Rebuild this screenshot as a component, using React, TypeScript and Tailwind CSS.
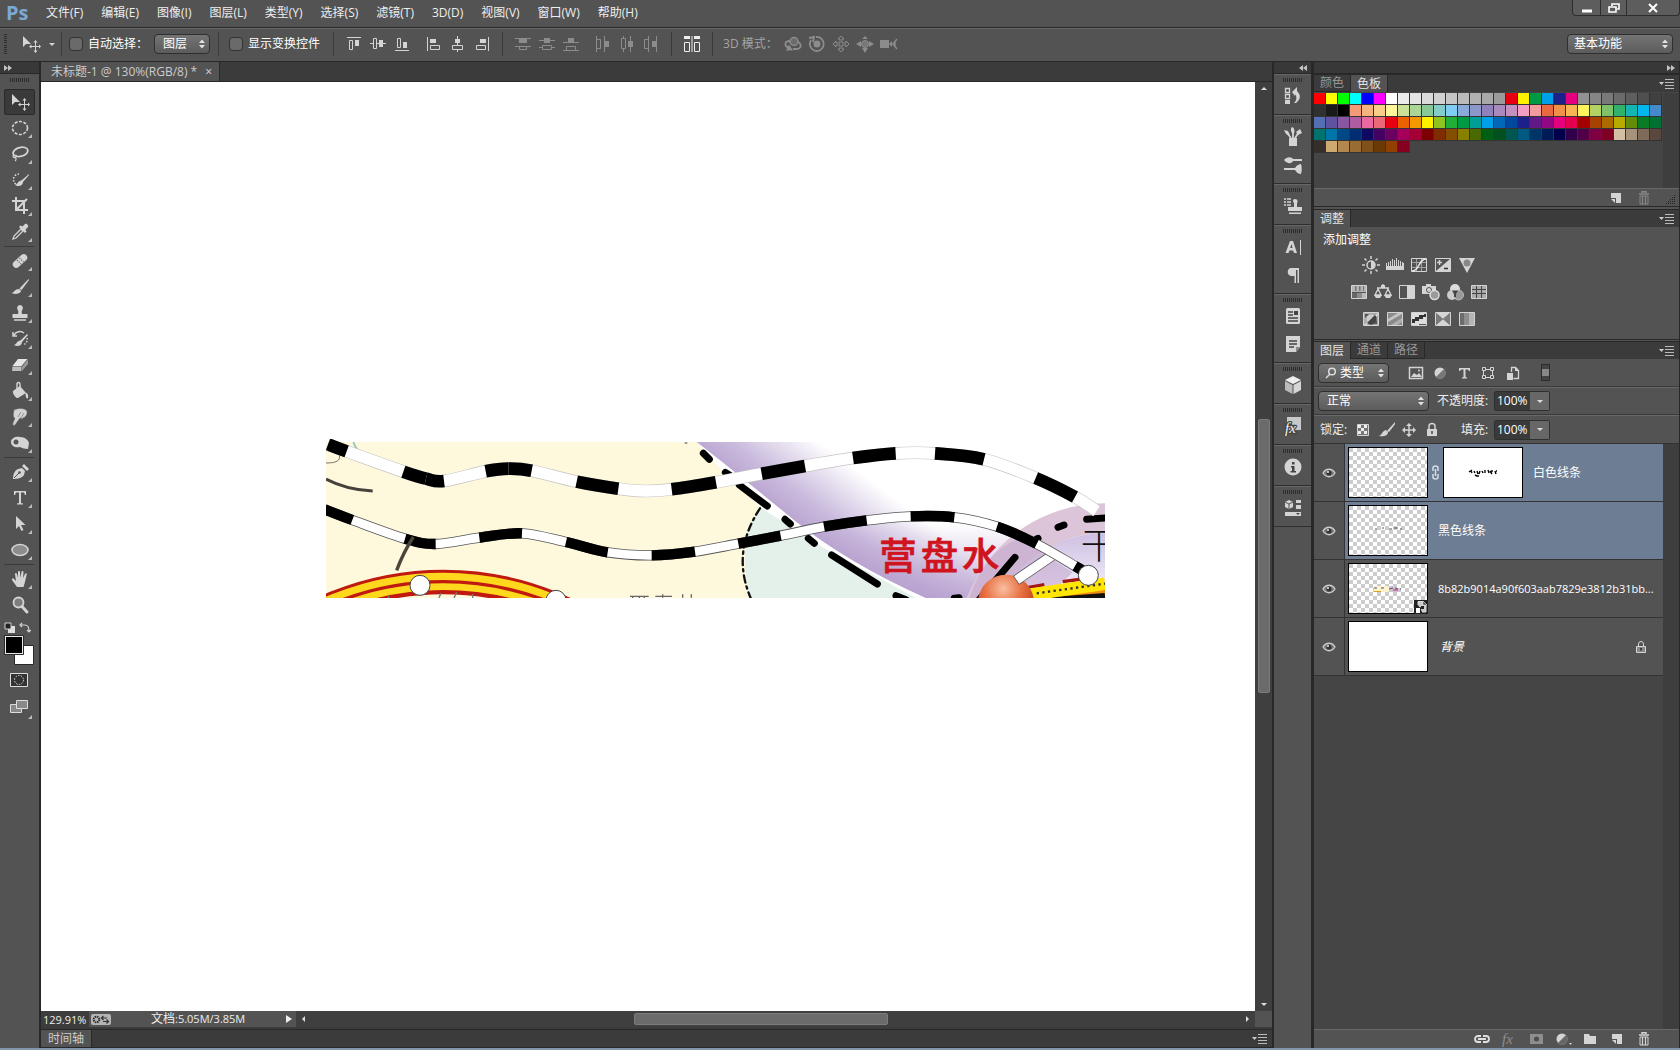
import { useState, type ReactNode } from "react";

type Point = [number, number];

const MENUS = ["文件(F)", "编辑(E)", "图像(I)", "图层(L)", "类型(Y)", "选择(S)", "滤镜(T)", "3D(D)", "视图(V)", "窗口(W)", "帮助(H)"];

const SWATCHES = [
  "ff0000 ffff00 00ff00 00ffff 0000ff ff00ff ffffff ebebeb e3e3e3 dadada d1d1d1 c6c6c6 bbbbbb b1b1b1 a8a8a8 9b9b9b e60012 fff100 009944 00a0e9 1d2088 e4007f 929292 868686 797979 6b6b6b 5e5e5e 4f4f4f 404040",
  "303030 1a1a1a 000000 f29b76 f6b37f facd89 fff799 cce198 acd598 89c997 84ccc9 7ecef4 88abda 8c97cb 8f82bc aa89bd c490bf f19ec2 f29c9f eb6841 f19149 f8b551 fff45c b3d465 80c269 32b16c 13b5b1 00b7ee 448aca",
  "556fb5 5f52a0 8957a1 ae5da1 ea68a2 eb6877 e60012 eb6100 f39800 fff100 8fc31f 22ac38 009944 009e96 00a0e9 0068b7 00479d 1d2088 601986 920783 e4007f e5004f a40000 a84200 ac6a00 b7aa00 638c0b 097c25 007130",
  "00736d 0075a9 004986 002e73 100964 440062 6a005f a4005b a40035 7d0000 7f2d00 834e00 8a8000 486a00 005e15 005020 005752 005982 003567 001c58 03004c 31004a 500047 7e0043 7d0022 d2bfa4 a6937c 7e6b5a 5a483f",
  "362e2b cfa972 b28850 996c33 81511c 6a3906 904000 870020",
].map((row) => row.split(" "));

function Icon({ size = 20, className = "", children }: { size?: number; className?: string; children: ReactNode }) {
  return (
    <svg width={size} height={size} viewBox={`0 0 ${size} ${size}`} className={`shrink-0 ${className}`} fill="none" stroke="none" aria-hidden="true">
      {children}
    </svg>
  );
}

/* ---------- icons, toolbox ---------- */
const L = "#d4d4d4";

const icons: Record<string, ReactNode> = {
  move: (
    <>
      <path d="M2 2v11l3-3h5z" fill={L} />
      <path d="M14.500 8v9M10 12.500h9" stroke={L} />
      <path d="M14.500 6l2 2.500h-4zM14.500 19l2-2.500h-4zM8 12.500l2.500-2v4zM20 12.500l-2-2v4z" fill={L} />
    </>
  ),
  ellipse: <ellipse cx="10" cy="10" rx="7.500" ry="6.500" stroke={L} strokeWidth="1.600" strokeDasharray="3 1.500" />,
  lasso: (
    <>
      <ellipse cx="10.500" cy="8" rx="7.500" ry="4.500" stroke={L} strokeWidth="1.800" transform="rotate(-14 10 8)" />
      <path d="M4 11c-2 1-1 3 1 2.500s2-2 .5-2.500M5.500 13.500c1 1.500.5 3-.5 3.500" stroke={L} strokeWidth="1.200" />
    </>
  ),
  quick: (
    <>
      <path d="M9 4a5 5 0 1 0 0 11" stroke={L} strokeWidth="1.600" strokeDasharray="1.500 1.500" />
      <path d="M19 4l-7 6-2 1c-2 0-2 3-5 4 3 2 8 1 8-3l6-7z" fill={L} />
    </>
  ),
  crop: <path d="M6 1v13h12M2 5h12v13M6 14L17 3" stroke={L} strokeWidth="2" />,
  dropper: (
    <>
      <path d="M3 17l1-3 7-7 2 2-7 7z" stroke={L} strokeWidth="1.300" />
      <path d="M9 5l1.500-1.500 2 1L15 2c1.500-1 4 1.500 3 3l-2.500 2.500 1 2L15 11z" fill={L} />
    </>
  ),
  heal: (
    <>
      <rect x="1.500" y="6.500" width="17" height="7" rx="3.500" fill={L} transform="rotate(-42 10 10)" />
      <path d="M7 9l4 4M9.500 7l4 4" stroke="#666" strokeWidth="1.200" strokeDasharray="1.200 1.200" />
    </>
  ),
  brush: <path d="M18.500 2L19 3l-7 9.500c-1 .5-2 0-2.500-1zM9 12l2 1.500c0 3-5 4.500-9.500 2.500 3-.5 3-4 7.500-4z" fill={L} />,
  stamp: (
    <>
      <path d="M10 2a3 3 0 0 1 2.500 4.500c-1 1.500-1 2.500-.5 4.500h5.500v4h-15v-4H8c.5-2 .5-3-.5-4.500A3 3 0 0 1 10 2z" fill={L} />
      <path d="M4 17h12" stroke={L} strokeWidth="1.500" />
    </>
  ),
  history: (
    <>
      <path d="M17 5l-6 6-2 1c-2 0-2 3-5 4 3 2 8 1 8-3l6-7z" fill={L} />
      <path d="M14 4C10 1 6 3 4 6M3 3v4h4" stroke={L} strokeWidth="1.500" />
      <path d="M17 9c1 3-1 6-4 7" stroke={L} strokeWidth="1.500" strokeDasharray="1.500 1.500" />
    </>
  ),
  eraser: (
    <>
      <path d="M8 4h9.500l-6 7H2.500z" fill="#e6e6e6" />
      <path d="M2.500 11.500h9V16H2z" fill="#bdbdbd" />
      <path d="M12 11.500l6-7V9l-6 7z" fill="#999" />
    </>
  ),
  bucket: (
    <>
      <path d="M3 10l7-5 6 7-8 5c-2 1-6-5-5-7z" fill={L} />
      <path d="M7 9V3c0-2 3-2 3 0v7" stroke={L} strokeWidth="1.400" />
      <path d="M15.500 12c2-1 3 3 2.500 5-1 1.500-2.500 0-2.500-5z" fill={L} />
    </>
  ),
  smudge: <path d="M4 3c4-2 9-2 12 0 2 2 1 5-1 7l-2 1-1 1-2-1-5 7c-1 1-3 0-2-2l2-5c-2 0-2-4-1-8zM8 10l3-5M11 11l3-5" fill={L} stroke="#666" strokeWidth=".6" />,
  sponge: (
    <>
      <path d="M1 9c0-4 5-6 9-5 5 0 8 3 9 6l-1 6c-3 0-6-1-8-2-5 1-9-1-9-5z" fill={L} />
      <circle cx="6" cy="9" r="2.500" fill="#555" />
    </>
  ),
  pen: (
    <>
      <path d="M3 17c0-4 1-8 5-10l4-1 3 3-1 4c-2 3-6 4-11 4z" fill={L} />
      <path d="M12 4l2-2 5 5-2 2z" fill={L} />
      <path d="M4 16l5-5" stroke="#555" />
      <circle cx="9.500" cy="10.500" r="1.300" fill="#555" />
    </>
  ),
  type: <path d="M4 3h12v4h-1l-1-2.500h-3V15l2 .5v1H7v-1l2-.5V4.500H6L5 7H4z" fill={L} />,
  arrow: <path d="M6 2v13l3-3 2.500 5 2-1-2.500-5h4.500z" fill={L} />,
  shape: <ellipse cx="10" cy="10" rx="8" ry="5.500" fill="#8d8d8d" stroke={L} strokeWidth="1.500" />,
  hand: <path d="M7 18l-5-7c-.5-1 1-2 2-1l2 2-1-7c0-1.500 1.500-1.500 2 0l1 4V3c0-1.500 2-1.500 2 0l.3 6L11.500 3c.4-1.500 2-1 2 .3L13 9l2-4c.6-1.200 2-.6 1.700.6L15 13l-1.500 5z" fill={L} />,
  zoom: (
    <>
      <circle cx="8.500" cy="7.500" r="5" fill="#7e7e7e" stroke={L} strokeWidth="1.800" />
      <path d="M12 11.500l5 5.500" stroke={L} strokeWidth="3" strokeLinecap="round" />
    </>
  ),
};

const TOOL_GROUPS = [
  [["move", "移动工具"], ["ellipse", "椭圆选框"], ["lasso", "套索"], ["quick", "快速选择"], ["crop", "裁剪"], ["dropper", "吸管"]],
  [["heal", "修复画笔"], ["brush", "画笔"], ["stamp", "仿制图章"], ["history", "历史记录画笔"], ["eraser", "橡皮擦"], ["bucket", "油漆桶"], ["smudge", "涂抹"], ["sponge", "海绵"]],
  [["pen", "钢笔"], ["type", "文字"], ["arrow", "路径选择"], ["shape", "椭圆"]],
  [["hand", "抓手"], ["zoom", "缩放"]],
];

function GripH({ className = "h-3" }: { className?: string }) {
  return (
    <div className={`flex items-center justify-center gap-px ${className}`}>
      {Array.from({ length: 10 }, (_, i) => <span key={i} className="h-1 w-px bg-[#2c2c2c]" />)}
    </div>
  );
}

function Chevrons({ left = false }: { left?: boolean }) {
  return (
    <svg width="8" height="6" viewBox="0 0 8 6" fill="#c4c4c4" aria-hidden="true">
      {left ? <path d="M4 0v6L0 3zM8 0v6L4 3z" /> : <path d="M0 0v6l4-3zM4 0v6l4-3z" />}
    </svg>
  );
}

function Toolbox() {
  const [tool, setTool] = useState("move");
  return (
    <aside className="flex w-[41px] shrink-0 flex-col border-r-2 border-[#282828] bg-[#535353]">
      <div className="flex h-3 items-center border-b border-[#282828] bg-[#383838] pl-1"><Chevrons /></div>
      <GripH />
      <div className="mt-[3px] flex flex-col">
        {TOOL_GROUPS.map((group, gi) => (
          <div key={gi} className={gi ? "relative mt-[3px] before:absolute before:-top-0.5 before:left-1 before:h-px before:w-[30px] before:bg-[#3a3a3a]" : ""}>
            {group.map(([id, label]) => (
              <button
                key={id}
                aria-label={label}
                onClick={() => setTool(id)}
                className={`relative ml-1 flex h-[26px] w-[31px] items-center justify-center rounded-xs border ${tool === id ? "border-[#2a2a2a] bg-[#3a3a3a]" : "border-transparent"}`}
              >
                <Icon>{icons[id]}</Icon>
                {id !== "move" && id !== "zoom" && (
                  <svg width="4" height="4" viewBox="0 0 4 4" className="absolute right-0.5 bottom-0.5"><path d="M4 0v4H0z" fill="#bbb" /></svg>
                )}
              </button>
            ))}
          </div>
        ))}
      </div>
      <div className="mt-0.5 flex h-4 items-center justify-between pr-2 pl-1">
        <Icon size={12}><path d="M4 4h7v7H4z" fill="#ddd" /><path d="M1 1h6v6H1z" fill="#222" stroke={L} /></Icon>
        <Icon size={12}><path d="M2 3h4c3 0 4 2 4 6M3 1L1 3l2 2M8 8l2 2 2-2" stroke={L} strokeWidth="1.200" /></Icon>
      </div>
      <svg width="36" height="32" viewBox="0 0 36 32" className="-mt-px">
        <path d="M14.500 10.500h19v19h-19z" fill="#fff" stroke="#2a2a2a" />
        <path d="M4.500.5h19v19h-19z" fill="#e8e8e8" stroke="#2a2a2a" />
        <path d="M6 2h16v16H6z" fill="#000" />
      </svg>
      <button aria-label="快速蒙版" className="mt-1 ml-2.5 flex h-[18px] w-[18px] items-center justify-center">
        <svg width="18" height="14" viewBox="0 0 18 14"><path d="M.5.5h17v13H.5z" fill="#333" stroke="#ddd" /><circle cx="9" cy="7" r="4.500" fill="none" stroke="#ddd" strokeDasharray="1.500 1.300" /></svg>
      </button>
      <button aria-label="屏幕模式" className="relative mt-2 ml-2.5 flex h-5 w-5 items-center">
        <svg width="18" height="14" viewBox="0 0 18 14" fill="#888" stroke="#ddd"><path d="M.5 4.500h11v8H.5z" /><path d="M6.500.5h11v8h-11z" /></svg>
        <svg width="4" height="4" viewBox="0 0 4 4" className="absolute -right-0.5 -bottom-0.5"><path d="M4 0v4H0z" fill="#bbb" /></svg>
      </button>
    </aside>
  );
}

/* ---------- menu bar and options bar ---------- */
function MenuBar() {
  return (
    <header className="flex h-7 shrink-0 items-center border-b border-[#282828] bg-[#535353] pb-0.5">
      <span className="w-[46px] pl-1.5 font-['Open_Sans',sans-serif] text-[20px] leading-6 font-bold text-[#7ba9d4]">Ps</span>
      <nav className="flex gap-[18px]">
        {MENUS.map((m) => <button key={m} className="whitespace-nowrap text-[#eee]">{m}</button>)}
      </nav>
      <div className="ml-auto flex h-4 self-start overflow-hidden rounded-b-sm border border-t-0 border-[#2d2d2d] bg-[#5d5d5d]">
        <button aria-label="最小化" className="flex w-7 items-center justify-center border-r border-[#2d2d2d]"><svg width="12" height="12" viewBox="0 0 12 12"><path d="M1 7.500h10v3H1z" fill="#fff" /></svg></button>
        <button aria-label="还原" className="flex w-[26px] items-center justify-center border-r border-[#2d2d2d]"><svg width="12" height="12" viewBox="0 0 12 12" fill="none" stroke="#fff" strokeWidth="1.600"><path d="M4 4V2h7v5H9M1 5h7v5H1z" /></svg></button>
        <button aria-label="关闭" className="flex w-[52px] items-center justify-center"><svg width="12" height="12" viewBox="0 0 12 12"><path d="M2 2l8 8M10 2l-8 8" stroke="#fff" strokeWidth="2" /></svg></button>
      </div>
    </header>
  );
}

function Divider() {
  return <span className="h-6 w-px shrink-0 bg-[#3a3a3a]" />;
}

function UpDown() {
  return (
    <svg width="6" height="9" viewBox="0 0 6 9" fill="#e2e2e2" className="pointer-events-none absolute top-1/2 right-1 -translate-y-1/2" aria-hidden="true">
      <path d="M3 0l3 3.500H0zM3 9l3-3.500H0z" />
    </svg>
  );
}

function Dropdown({ label, value, className, pad = "pl-2" }: { label: string; value: string; className: string; pad?: string }) {
  return (
    <div className={`relative h-5 rounded-sm border border-[#2f2f2f] bg-linear-to-b from-[#747474] to-[#5c5c5c] ${className}`}>
      <select aria-label={label} className={`block h-full w-full appearance-none bg-transparent text-white outline-none ${pad}`}>
        <option>{value}</option>
      </select>
      <UpDown />
    </div>
  );
}

function Check({ children }: { children: ReactNode }) {
  return (
    <label className="flex items-center gap-[5px] whitespace-nowrap text-white">
      <input type="checkbox" className="h-[14px] w-[14px] appearance-none rounded-sm border border-[#333] bg-[#6a6a6a] checked:bg-[#cfcfcf]" />
      {children}
    </label>
  );
}

const alignIcons = [
  <><path d="M2 2.500h14" stroke={L} /><path d="M4.500 5.500h3v9h-3z" stroke={L} /><path d="M10 5h4v6h-4z" fill={L} /></>,
  <><path d="M1 8.500h16" stroke={L} /><path d="M4.500 3.500h3v10h-3z" stroke={L} fill="#535353" /><path d="M10 5h4v7h-4z" fill={L} /></>,
  <><path d="M2 15.500h14" stroke={L} /><path d="M4.500 3.500h3v9h-3z" stroke={L} /><path d="M10 7h4v6h-4z" fill={L} /></>,
  <><path d="M2.500 2v14" stroke={L} /><path d="M5 4h6v4H5z" fill={L} /><path d="M5.500 10.500h9v4h-9z" stroke={L} /></>,
  <><path d="M8.500 1v16" stroke={L} /><path d="M6 4h5v4H6z" fill={L} /><path d="M3.500 10.500h10v4h-10z" stroke={L} fill="#535353" /></>,
  <><path d="M15.500 2v14" stroke={L} /><path d="M7 4h6v4H7z" fill={L} /><path d="M3.500 10.500h9v4h-9z" stroke={L} /></>,
];
const G = "#8c8c8c";
const distributeIcons = [
  <><path d="M1 3.500h16M1 11.500h16" stroke={G} /><path d="M5 4h8v4H5z" fill={G} /><path d="M5.500 11.500h7v3h-7z" stroke={G} /></>,
  <><path d="M1 5.500h16M1 12.500h16" stroke={G} /><path d="M6 3h6v5H6z" fill={G} /><path d="M4.500 10.500h9v4h-9z" stroke={G} fill="#535353" /></>,
  <><path d="M1 7.500h16M1 15.500h16" stroke={G} /><path d="M6 3h6v4H6z" fill={G} /><path d="M4.500 11.500h9v4h-9z" stroke={G} /></>,
  <><path d="M2.500 1v16M10.500 1v16" stroke={G} /><path d="M2.500 4.500h4v9h-4z" stroke={G} /><path d="M11 6h4v6h-4z" fill={G} /></>,
  <><path d="M5.500 1v16M12.500 1v16" stroke={G} /><path d="M3.500 3.500h4v10h-4z" stroke={G} fill="#535353" /><path d="M10 6h5v6h-5z" fill={G} /></>,
  <><path d="M6.500 1v16M14.500 1v16" stroke={G} /><path d="M2.500 4.500h4v9h-4z" stroke={G} /><path d="M10 6h4v6h-4z" fill={G} /></>,
];
const modeIcons = [
  <><path d="M6 6c-6 0-6 5-1 7M12 6c6 2 6 7 1 8H9" stroke={G} strokeWidth="1.800" /><circle cx="10" cy="6.500" r="4" fill="#6c6c6c" stroke={G} strokeWidth="1.500" /><path d="M5 9.500l4 6H2z" fill={G} /></>,
  <><circle cx="9" cy="9" r="3.500" fill={G} /><path d="M3 5a7 7 0 1 0 5-3M1 3l5-1-1 5" stroke={G} strokeWidth="1.800" /></>,
  <path d="M9 1l3 3h-2v4h4V6l3 3-3 3v-2h-4v4h2l-3 3-3-3h2v-4H4v2L1 9l3-3v2h4V4H6z" stroke={G} strokeWidth="1" />,
  <><circle cx="9" cy="9" r="3.500" fill="#777" stroke={G} /><path d="M9 1l3 3H6zM6 13h6l-3 5zM0 9l5-3v6zM18 9l-5-3v6z" fill={G} /></>,
  <><path d="M0 5h9v8H0zM9 9l3-3v6z" fill={G} /><path d="M17 4l-4 5 4 5M15 7v4" stroke={G} strokeWidth="1.400" /></>,
];

function IconStrip({ items, names, className = "gap-1.5" }: { items: ReactNode[]; names: string; className?: string }) {
  return (
    <div className={`flex ${className}`}>
      {items.map((it, i) => <button key={i} aria-label={`${names} ${i + 1}`}><Icon size={18}>{it}</Icon></button>)}
    </div>
  );
}

function OptionsBar() {
  return (
    <div className="flex h-[34px] shrink-0 items-center border-t border-b border-t-[#686868] border-b-[#282828] bg-[#535353] pb-0.5">
      <div className="flex w-[61px] items-center">
        <div className="ml-1 flex h-5 w-[3px] flex-col justify-between">
          {Array.from({ length: 10 }, (_, i) => <span key={i} className="h-px bg-[#2c2c2c]" />)}
        </div>
        <Icon className="ml-[14px]">{icons.move}</Icon>
        <span className="ml-[8px] border-x-3 border-t-3 border-transparent border-t-[#d4d4d4]" />
      </div>
      <Divider />
      <div className="ml-[7px] w-[85px]"><Check>自动选择：</Check></div>
      <Dropdown label="自动选择" value="图层" className="w-14" />
      <span className="w-2" />
      <Divider />
      <div className="mr-[13px] ml-2.5"><Check>显示变换控件</Check></div>
      <Divider />
      <div className="mx-[11px] flex gap-[14px]">
        <IconStrip items={alignIcons.slice(0, 3)} names="对齐" />
        <IconStrip items={alignIcons.slice(3)} names="水平对齐" />
      </div>
      <Divider />
      <div className="mx-[11px] flex gap-[14px]">
        <IconStrip items={distributeIcons.slice(0, 3)} names="分布" />
        <IconStrip items={distributeIcons.slice(3)} names="水平分布" />
      </div>
      <Divider />
      <button aria-label="自动对齐图层" className="mx-[11px]">
        <Icon size={18}><path d="M1 1h6v3H1zM11 1h6v3h-6z" fill="#eee" /><path d="M1.500 7.500h5v9h-5zM11.500 7.500h5v9h-5z" stroke="#eee" /><path d="M9 1v16" stroke="#eee" /></Icon>
      </button>
      <Divider />
      <span className="ml-2.5 w-[61px] whitespace-nowrap text-[#a4a4a4]">3D 模式：</span>
      <IconStrip items={modeIcons} names="3D 模式" />
      <div className="mr-[7px] ml-auto"><Dropdown label="工作区" value="基本功能" className="w-[106px]" pad="pl-1.5" /></div>
    </div>
  );
}

/* ---------- document ---------- */
// Each point starts a stretch of track; "b" marks the stretches painted black.
const UPPER: [number, number, string][] = [
  [6, 16, "b"], [62, 37, "w"], [232, 98, "b"], [300, 119, "b"], [354, 126, "w"], [479, 97, "b"], [548, 89, "b"], [617, 95, "w"], [752, 128, "b"], [877, 149, "w"],
  [957, 156, "w"], [1037, 151, "b"], [1170, 130, "w"], [1307, 104, "b"], [1437, 81, "w"], [1581, 57, "b"], [1709, 43, "w"], [1827, 43, "b"], [1974, 61, "w"], [2129, 117, "b"], [2247, 174, "w"], [2312, 216, "w"],
];
const LOWER: [number, number, string][] = [
  [-4, 211, "b"], [79, 243, "w"], [237, 299, "b"], [329, 315, "w"], [460, 296, "b"], [588, 283, "w"], [720, 309, "b"], [845, 340, "w"], [977, 349, "b"], [1107, 338, "w"],
  [1237, 314, "b"], [1364, 290, "w"], [1494, 263, "b"], [1622, 244, "w"], [1754, 232, "b"], [1885, 235, "w"], [2013, 263, "b"], [2132, 315, "w"], [2247, 381, "b"], [2272, 396, "w"],
];

function curves(pts: Point[]) {
  return pts.slice(0, -1).map((p, i) => {
    const prev = pts[i - 1] ?? p;
    const next = pts[i + 1];
    const after = pts[i + 2] ?? next;
    return `M${p[0]} ${p[1]}C${p[0] + (next[0] - prev[0]) / 6} ${p[1] + (next[1] - prev[1]) / 6} ${next[0] - (after[0] - p[0]) / 6} ${next[1] - (after[1] - p[1]) / 6} ${next[0]} ${next[1]}`;
  });
}

function Track({ data, width, edge, inset = 4 }: { data: [number, number, string][]; width: number; edge: string; inset?: number }) {
  const segs = curves(data.map(([x, y]) => [x, y]));
  const whole = segs.map((s, i) => (i ? s.slice(s.indexOf("C")) : s)).join("");
  return (
    <g fill="none">
      <path d={whole} stroke={edge} strokeWidth={width} />
      <path d={whole} stroke="#fff" strokeWidth={width - inset} />
      {segs.map((s, i) => data[i][2] === "b" && <path key={i} d={s} stroke="#000" strokeWidth={width} />)}
    </g>
  );
}

function MapArtwork() {
  return (
    <svg width="779" height="159" viewBox="0 0 2337 477" className="block shrink-0 overflow-hidden" role="img" aria-label="营盘水线路图">
      <defs>
        <linearGradient id="violet" gradientUnits="userSpaceOnUse" x1="1372" y1="233" x2="1520" y2="36">
          <stop offset="0" stopColor="#b8a3d0" /><stop offset=".35" stopColor="#cabbdd" /><stop offset="1" stopColor="#fff" />
        </linearGradient>
        <linearGradient id="haze" gradientUnits="userSpaceOnUse" x1="0" y1="250" x2="0" y2="477">
          <stop offset="0" stopColor="#b49bcd" stopOpacity="0" /><stop offset="1" stopColor="#b49bcd" stopOpacity=".75" />
        </linearGradient>
        <linearGradient id="disc" x1="0" y1="0" x2="0" y2="1"><stop offset="0" stopColor="#cdbfe2" /><stop offset=".25" stopColor="#f4f0fa" /></linearGradient>
        <radialGradient id="ball" cx=".45" cy=".25" r=".6"><stop offset="0" stopColor="#f9bfa2" /><stop offset=".5" stopColor="#e9774a" /><stop offset="1" stopColor="#c9431c" /></radialGradient>
        <clipPath id="page"><path d="M0 9H2337V477H0z" /></clipPath>
      </defs>
      <g clipPath="url(#page)">
        <path d="M0 9H2337V477H0z" fill="#fff" />
        <path d="M0 9H1112L1187 93L1302 205Q1230 310 1272 477H0z" fill="#fef8dd" />
        <path d="M1302 205L1372 250L1472 315L1770 477H1272Q1230 310 1302 205z" fill="#e4f0ea" />
        <path d="M1112 9H2337V477H1800Q1560 370 1400 240Q1230 100 1112 9z" fill="url(#violet)" />
        <path d="M1400 240H2337V477H1800Q1560 370 1400 240z" fill="url(#haze)" />
        <circle cx="2337" cy="639" r="356" fill="url(#disc)" />
        <circle cx="2337" cy="639" r="401" fill="none" stroke="#dcc5d9" strokeWidth="90" />
        <path d="M1930 477Q1980 330 2080 300L2240 400L2160 477z" fill="#c4a9cf" opacity=".6" />
        <g stroke="#000" strokeWidth="21" strokeLinecap="round" fill="none">
          <path d="M1132 43l18 18M1198 100l12 8M1240 138l84 63M1377 241l16 14M1447 298l18 15M1517 348l137 87M1710 470l30 12M2067 355l-110 130M2196 265l18-7M2132 300l4-2M2282 241l60-4M1885 478l14-2" />
        </g>
        <path d="M1302 208Q1215 340 1274 477" fill="none" stroke="#111" strokeWidth="7" strokeDasharray="22 12 7 12" strokeLinecap="round" />
        {/* ring road */}
        <g fill="none">
          <circle cx="352" cy="1293" r="864" stroke="#c01a10" strokeWidth="74" />
          <circle cx="352" cy="1293" r="881" stroke="#ffd81e" strokeWidth="22" />
          <circle cx="352" cy="1293" r="850" stroke="#ffd81e" strokeWidth="20" />
          <path d="M188 470v10M345 462l-6 15M392 460l-8 17M440 465v12" stroke="#777" strokeWidth="4" />
          <path d="M0 120Q60 152 140 156" stroke="#45423c" strokeWidth="9" />
          <path d="M0 72c30 0 44-6 40-24" stroke="#77736a" strokeWidth="3" />
          <path d="M82 9q8 24 22 28" stroke="#5ba7a5" strokeWidth="6" opacity=".6" />
          <path d="M912 472h56M920 477v-6M940 477v-6M955 477v-6M988 472h50M1010 466v10M1070 466v10M1096 466v10" stroke="#666" strokeWidth="4" />
          <path d="M1076 12h8" stroke="#888" strokeWidth="5" />
        </g>
        {/* highway on the right */}
        <path d="M2100 477L2337 440V477z" fill="#f08c12" />
        <path d="M2180 484l157-12" stroke="#111" strokeWidth="20" />
        <path d="M2100 447l55-10M2210 428l60-8" stroke="#a31616" strokeWidth="10" />
        <path d="M2090 470L2337 434" stroke="#ffe500" strokeWidth="38" />
        <path d="M2132 463L2337 434" stroke="#333" strokeWidth="7" strokeDasharray="7 10" />
        <circle cx="2040" cy="491" r="84" fill="url(#ball)" />
        <g fontFamily="'Noto Sans CJK SC', sans-serif">
          <g fontWeight="500" fontSize="112" fill="#cf1420" stroke="#cf1420" strokeWidth="2">
            <text x="1660" y="392">营</text>
            <text x="1784" y="392">盘</text>
            <text x="1908" y="392">水</text>
          </g>
          <text x="2264" y="361" fontSize="110" fontWeight="300" fill="#111">干</text>
        </g>
        <path d="M2184 346L2070 424" stroke="#555" strokeWidth="32" />
        <path d="M2186 345L2072 423" stroke="#fff" strokeWidth="28" />
      </g>
      <Track data={LOWER} width={31} edge="#555" inset={5} />
      <path d="M262 294Q232 340 212 394" fill="none" stroke="#4b463c" strokeWidth="10" />
      <g fill="#fff" stroke="#444" strokeWidth="3">
        <circle cx="282" cy="439" r="30" />
        <circle cx="690" cy="484" r="30" />
        <circle cx="2287" cy="409" r="30" />
      </g>
      <Track data={UPPER} width={38} edge="#c4c4c4" />
    </svg>
  );
}

function PanelMenu() {
  return (
    <button aria-label="面板菜单" className="ml-auto flex items-center pr-1">
      <svg width="16" height="10" viewBox="0 0 16 10"><path d="M0 3h5L2.500 6z" fill="#ccc" /><path d="M6 .5h9M6 3.500h9M6 6.500h9M6 9.500h9" stroke="#bbb" /></svg>
    </button>
  );
}

function Document() {
  return (
    <main className="flex min-w-0 flex-1 flex-col bg-[#3b3b3b]">
      <div className="flex h-5 shrink-0 border-b border-[#282828] bg-[#3b3b3b]">
        <div className="flex items-center gap-2 border-r border-[#282828] bg-[#535353] pr-[7px] pl-[10px] whitespace-nowrap text-[#ccc]">
          未标题-1 @ 130%(RGB/8) *
          <button aria-label="关闭文档" className="text-[#ddd]">×</button>
        </div>
      </div>
      <div className="flex min-h-0 flex-1">
        <div className="min-w-0 flex-1 overflow-hidden bg-white pt-[357px] pl-[285px]"><MapArtwork /></div>
        <div className="flex w-[17px] flex-col items-center justify-between bg-[#3f3f3f] py-[5px]">
          <span className="border-x-3 border-b-3 border-transparent border-b-[#ddd]" />
          <div className="flex w-full flex-1 flex-col items-center">
            <div className="h-[36%]" />
            <div className="h-[30%] w-3 rounded-xs border border-[#7c7c7c] bg-[#6b6b6b]" />
          </div>
          <span className="border-x-3 border-t-3 border-transparent border-t-[#ddd]" />
        </div>
      </div>
      <div className="flex h-4 shrink-0 items-center bg-[#535353] text-[#eee]">
        <input aria-label="缩放比例" defaultValue="129.91%" className="h-full w-[48px] bg-[#3d3d3d] pl-0.5 text-[11px] outline-none" />
        <svg width="20" height="11" viewBox="0 0 20 11" className="ml-[2px]"><rect width="20" height="11" rx="2" fill="#b4b4b4" /><circle cx="5.500" cy="5.500" r="2.800" fill="none" stroke="#333" strokeWidth="2" strokeDasharray="1.500 .7" /><path d="M11 4h5M12.500 2L10.500 4l2 2M12 7.500h5M15.500 5.500l2 2-2 2" stroke="#333" strokeWidth="1.200" fill="none" /></svg>
        <span className="ml-10 w-[135px] whitespace-nowrap text-[11px]"><span className="text-[12px]">文档</span>:5.05M/3.85M</span>
        <span className="border-y-4 border-l-6 border-transparent border-l-[#eee]" />
        <div className="ml-1 flex h-full flex-1 items-center bg-[#3f3f3f] px-1.5">
          <span className="border-y-3 border-r-3 border-transparent border-r-[#ddd]" />
          <div className="flex flex-1">
            <div className="w-[35%]" />
            <div className="h-3 w-[27%] rounded-xs border border-[#7c7c7c] bg-[#6b6b6b]" />
          </div>
          <span className="border-y-3 border-l-3 border-transparent border-l-[#ddd]" />
        </div>
        <span className="w-[17px]" />
      </div>
      <div className="mt-0.5 flex h-[19px] shrink-0 border-t border-b border-[#282828] bg-[#3b3b3b]">
        <button className="border-r border-[#282828] bg-[#535353] px-[7px] leading-4 text-[#ccc]">时间轴</button>
        <PanelMenu />
      </div>
    </main>
  );
}

/* ---------- collapsed dock ---------- */
const dockGroups: [string, ReactNode][][] = [
  [["历史记录", <><path d="M2.500 2.500h4v4h-4zM2.500 8.500h4v4h-4z" stroke={L} strokeWidth="1.300" /><path d="M2 14h5v4H2z" fill={L} /><path d="M9 6l5-5v4c4 4 4 8-1 12h-2c3-3 3-6 1-9v2z" fill={L} /></>]],
  [
    ["画笔预设", <><path d="M6 11h8v8H6z" fill={L} /><path d="M8 11L4 6M10 11V6M12 11l4-6" stroke={L} strokeWidth="1.800" /><path d="M9 0c3 1 3 5 1.500 7C8 6 7 2 9 0zM1 3l4 1 2 4-4-1zM13 5l4-3 2 4-4 2z" fill={L} /></>],
    ["画笔", <><path d="M1 5c3-4 8-3 9-1h9v2h-9c-1 3-6 3-9-1zM1 13h11c2-3 4-4 6-4 1 3 1 7 0 10-2 0-4-1-6-4H1z" fill={L} /></>],
  ],
  [["仿制源", <><path d="M1 3h2M4 3h4M1 6h2M4 6h4M1 9h2M4 9h4" stroke={L} strokeWidth="1.500" /><path d="M12 3c3 0 3 3 2 4v4h5v4H5v-4h6V7c-1-1-2-4 1-4zM6 16.500h12V18H6z" fill={L} /></>]],
  [
    ["字符", <><path d="M7 4h3l4 12h-3l-.8-2.500H6.500L5.500 16h-3zM7.200 11h2.400L8.500 7z" fill={L} /><path d="M17.500 3v15" stroke={L} /></>],
    ["段落", <path d="M8 3h8v15h-1.500V5H13v13h-1.500v-7H9C3 11 4 3 8 3z" fill={L} />],
  ],
  [
    ["字符样式", <><rect x="3" y="2" width="14" height="16" rx="1.500" fill={L} /><path d="M5 6h5M5 9h5M5 12h10M5 15h10" stroke="#444" strokeWidth="1.500" /><path d="M11 5h4v4h-4z" fill="#444" /></>],
    ["段落样式", <><path d="M3 2h14v11l-4 5H3z" fill={L} /><path d="M6 7h8M6 10h8M6 13h5" stroke="#444" strokeWidth="1.500" /><path d="M17 13h-4v5z" fill="#888" /></>],
  ],
  [["3D", <><path d="M10 1l8 4-8 4-8-4z" fill="#eee" /><path d="M2 6l7.500 4v9L2 15z" fill="#bbb" /><path d="M18 6l-7.500 4v9l7.500-4z" fill="#d6d6d6" /></>]],
  [["样式", <><path d="M4 1h14v13H4z" fill="#c8c8c8" /><text x="2" y="17" fontSize="15" fontStyle="italic" fontFamily="'Liberation Serif', serif" fill="#f4f4f4" stroke="#444" strokeWidth="2.500" paintOrder="stroke">fx</text></>]],
  [["信息", <><circle cx="10" cy="10" r="8.500" fill={L} /><path d="M9 5h2.500v2.500H9zM8 9h3.500v5H13v1.500H7.500V14H9v-3.500H8z" fill="#444" /></>]],
  [["属性", <><path d="M6 2l4 2v5l-4 2-4-2V4z" fill={L} /><path d="M2 4l4 2 4-2M6 6v5" stroke="#555" /><path d="M13 2h5v3h-5zM13 7h5v4h-5zM2 14h16v4H2z" fill={L} /><path d="M13 15h4l-2 2z" fill="#444" /></>]],
];

function Dock() {
  return (
    <aside className="flex w-[41px] shrink-0 flex-col border-x-2 border-[#282828] bg-[#535353]">
      <div className="flex h-3 shrink-0 items-center justify-end border-b border-[#282828] bg-[#383838] pr-1"><Chevrons left /></div>
      {dockGroups.map((group, i) => (
        <div key={i} className="border-t border-b border-t-[#666] border-b-[#2e2e2e] pb-1.5">
          <GripH className="h-[9px]" />
          {group.map(([label, icon], j) => (
            <button key={label} aria-label={label} className={`flex h-6 w-full items-center justify-center ${j ? "mt-1" : ""}`}><Icon>{icon}</Icon></button>
          ))}
        </div>
      ))}
    </aside>
  );
}

/* ---------- panels ---------- */
function TabRow({ tabs, active }: { tabs: string[]; active: number }) {
  return (
    <div className="flex h-[18px] shrink-0 border-t border-[#282828] bg-[#3b3b3b]">
      {tabs.map((t, i) => (
        <button key={t} className={`w-[37px] border-r border-[#282828] leading-4 ${i === active ? "bg-[#535353] text-[#e4e4e4]" : "border-b text-[#999]"}`}>{t}</button>
      ))}
      <PanelMenu />
    </div>
  );
}

function Trash({ color = L }: { color?: string }) {
  return <><path d="M5 2V.8h4V2M2 3h10" stroke={color} strokeWidth="1.500" /><path d="M3 5h8v8H3z" stroke={color} /><path d="M5.500 5v8M8.500 5v8" stroke={color} strokeWidth="1.200" /></>;
}

function SwatchesPanel() {
  return (
    <section>
      <TabRow tabs={["颜色", "色板"]} active={1} />
      <div className="flex h-24 bg-[#454545] pt-px">
        <div className="flex-1">
          {SWATCHES.map((row, i) => (
            <div key={i} className="flex">
              {row.map((c, j) => <button key={j} aria-label={`#${c}`} className="h-3 w-3 border-r border-b border-[#333]" style={{ backgroundColor: `#${c}` }} />)}
            </div>
          ))}
        </div>
        <div className="w-4 bg-[#3e3e3e]" />
      </div>
      <div className="flex h-[19px] items-center justify-end border-t border-b border-t-[#686868] border-b-[#282828]">
        <button aria-label="新建色板" className="mr-[14px]"><Icon size={14}><path d="M2 2h10v10H7V7H2z" fill={L} /><path d="M2 8h4v4z" fill={L} /></Icon></button>
        <button aria-label="删除色板" className="mr-[14px]"><Icon size={14}><Trash color="#888" /></Icon></button>
        <svg width="12" height="12" viewBox="0 0 12 12" className="mr-0.5 self-end" fill="#222"><path d="M9 1h1v1H9zM7 3h1v1H7zM9 3h1v1H9zM5 5h1v1H5zM7 5h1v1H7zM9 5h1v1H9zM3 7h1v1H3zM5 7h1v1H5zM7 7h1v1H7zM9 7h1v1H9zM1 9h1v1H1zM3 9h1v1H3zM5 9h1v1H5zM7 9h1v1H7zM9 9h1v1H9z" /></svg>
      </div>
    </section>
  );
}

const box = <path d="M1.500 2.500h15v13h-15z" stroke={L} />;
const adjustments: ReactNode[][] = [
  [
    <><circle cx="9" cy="9" r="4" stroke={L} strokeWidth="1.500" /><path d="M9 5a4 4 0 0 1 0 8z" fill={L} /><path d="M9 0v3M9 15v3M0 9h3M15 9h3M2.500 2.500l2 2M13.500 13.500l2 2M2.500 15.500l2-2M13.500 4.500l2-2" stroke={L} strokeWidth="1.500" /></>,
    <path d="M0 14V7h1v3h1V6h1v4h1V5h1v5h1V3h1v7h1V4h1v6h1V2h1v8h1V4h1v6h1V5h1v5h1V6h1v1h1v7z" fill={L} />,
    <>{box}<path d="M6.500 3v12M11.500 3v12M2 6.500h14M2 11.500h14" stroke="#a0a0a0" /><path d="M2 15c8 0 6-12 14-12" stroke="#eee" strokeWidth="1.500" /></>,
    <>{box}<path d="M16 3v12H2z" fill={L} /><path d="M3 6.500h5M5.500 4v5" stroke={L} strokeWidth="1.500" /><path d="M10 12.500h4" stroke="#333" strokeWidth="1.500" /></>,
    <><path d="M1 2h16L9 17z" fill={L} /><circle cx="9" cy="7" r="3.500" fill="#888" /></>,
  ],
  [
    <>{box}<path d="M2 3h14v6H2z" fill="#b4b4b4" /><path d="M5 3h1.500v5H5zM9 3h1.500v5H9zM13 3h1v5h-1z" fill="#777" /><path d="M2 10h5v5H2z" fill="#666" /><path d="M7 10h5v5H7z" fill="#8c8c8c" /><path d="M12 10h4v5h-4z" fill="#bbb" /></>,
    <><path d="M9 1v4M3 5h12M4 6l-3 6h6zM14 6l-3 6h6z" stroke={L} strokeWidth="1.300" /><path d="M0 12h8l-2 3H2zM10 12h8l-2 3h-4zM7 2h4v3H7z" fill={L} /></>,
    <>{box}<path d="M9 3h7v12H9z" fill={L} /></>,
    <><path d="M0 3h4V1h5v2h5v8H0z" fill={L} /><circle cx="7" cy="7" r="2.500" fill={L} stroke="#555" /><circle cx="12.500" cy="12" r="4.500" fill="#9a9a9a" stroke="#ddd" strokeWidth="1.500" /></>,
    <><circle cx="9" cy="6" r="5" fill="#ddd" /><circle cx="6" cy="12" r="5" fill="#ccc" /><circle cx="12.500" cy="12" r="5" fill="#999" stroke={L} strokeWidth=".7" /><path d="M6 7.500h6l-2 3.500v3H8v-3z" fill="#444" /></>,
    <>{box}<path d="M2 3h14v12H2z" fill="#aaa" /><path d="M6.500 3v12M11.500 3v12M2 6.500h14M2 10.500h14" stroke="#444" /></>,
  ],
  [
    <>{box}<path d="M2 3h14v12H2z" fill="#aaa" /><path d="M2 15L16 3v2L4 15z" fill="#ddd" /><circle cx="9" cy="9" r="4.500" fill="#ccc" /><path d="M13 5a5 5 0 0 1-8 8z" fill="#444" /><path d="M3 4h4L3 8zM15 14h-4l4-4z" fill="#555" /></>,
    <>{box}<path d="M2 3h14v12H2z" fill="#8a8a8a" /><path d="M2 9L12 3h4v1L2 12z" fill="#c4c4c4" /><path d="M5 15l11-7v4l-5 3z" fill="#b0b0b0" /></>,
    <>{box}<path d="M2 3h14v12H2z" fill="#ddd" /><path d="M2 9h3V7h4V5h5V4h2v3h-3v2H9v2H5v2H2z" fill="#333" /><path d="M9 14h7v1H9z" fill="#555" /></>,
    <>{box}<path d="M2 3l7 6 7-6zM2 15l7-6 7 6z" fill={L} /><path d="M2 3v12l7-6zM16 3v12L9 9z" fill="#7a7a7a" /></>,
    <>{box}<path d="M2 3h4v12H2z" fill="#6c6c6c" /><path d="M6 3h5v12H6z" fill="#8e8e8e" /><path d="M11 3h5v12h-5z" fill="#b4b4b4" /></>,
  ],
];

function AdjustmentsPanel() {
  return (
    <section className="mt-0.5 border-b border-[#282828]">
      <TabRow tabs={["调整"]} active={0} />
      <p className="px-[9px] pt-[3px] leading-5 text-white">添加调整</p>
      <div className="flex flex-col gap-[9px] pt-1.5 pb-[11px]">
        {adjustments.map((row, i) => (
          <div key={i} className={`flex ${i === 1 ? "pl-9" : "pl-12"}`}><IconStrip items={row} names={`调整 ${i + 1}`} /></div>
        ))}
      </div>
    </section>
  );
}

function Percent({ label }: { label: string }) {
  return (
    <div className="flex h-5 w-14 rounded-xs border border-[#2f2f2f]">
      <input aria-label={label} defaultValue="100%" className="w-[35px] bg-[#3a3a3a] pl-0.5 text-[12px] text-white outline-none" />
      <button aria-label={`${label}滑块`} className="flex flex-1 items-center justify-center bg-[#676767]"><span className="border-x-3 border-t-3 border-transparent border-t-[#ddd]" /></button>
    </div>
  );
}

const filterIcons = [
  <><path d="M2.500 3.500h13v11h-13z" stroke={L} strokeWidth="1.500" /><path d="M4 13l3-4 3 2 2-2 3 4z" fill={L} /><circle cx="12" cy="6.500" r="1" fill={L} /></>,
  <><circle cx="9" cy="9" r="5.500" fill={L} /><path d="M13 5a5.500 5.500 0 0 1-8 8z" fill="#777" /></>,
  <path d="M4 4h11v3h-1l-1-1.500h-2.500V13l1.500.5v1H7v-1l1.500-.5V5.500H6L5 7H4z" fill={L} />,
  <><path d="M4.500 5.500h9v8h-9z" stroke={L} /><path d="M3.500 3.500h3v3h-3zM11.500 3.500h3v3h-3zM3.500 11.500h3v3h-3zM11.500 11.500h3v3h-3z" fill="#535353" stroke={L} /></>,
  <><path d="M8.500 8V3.500h4l3 3v8h-5" stroke={L} strokeWidth="1.300" /><path d="M4 9h6v7H4zM12 3l4 4h-4z" fill={L} /></>,
];
const lockIcons = [
  <><path d="M3.500 3.500h11v11h-11z" fill="#777" stroke={L} /><path d="M4 4h3v3H4zM10 4h3v3h-3zM7 7h3v3H7zM4 10h3v3H4zM10 10h3v3h-3z" fill="#eee" /></>,
  <path d="M18 1l1 1-7 9-2-1zM9 9l2 2c0 4-5 5-9 4 3-1 3-5 7-6z" fill={L} />,
  <><path d="M9 3v12M3 9h12" stroke={L} strokeWidth="1.500" /><path d="M9 2l3 3H6zM9 16l3-3H6zM2 9l3-3v6zM16 9l-3-3v6z" fill={L} /></>,
  <><path d="M4 8h10v7H4z" fill={L} /><path d="M6 8V5.500a3 3 0 0 1 6 0V8" stroke={L} strokeWidth="1.500" /><path d="M9 10v3" stroke="#444" strokeWidth="1.500" /></>,
];

function Thumb({ clear = true, children }: { clear?: boolean; children?: ReactNode }) {
  return (
    <div className={`relative h-[51px] w-20 shrink-0 border border-black ${clear ? "bg-[conic-gradient(#fff_25%,#ccc_0_50%,#fff_0_75%,#ccc_0)] bg-[length:8px_8px]" : "bg-white"}`}>
      {children}
    </div>
  );
}

function LayerRow({ selected = false, children }: { selected?: boolean; children: ReactNode }) {
  return (
    <li className="flex h-[58px] border-b border-[#333]">
      <button aria-label="显示图层" className="flex w-[31px] shrink-0 items-center justify-center border-r border-[#333]">
        <svg width="14" height="10" viewBox="0 0 14 10"><path d="M1 5c3-5 9-5 12 0-3 5-9 5-12 0z" fill="#777" stroke="#ccc" strokeWidth="1.300" /><circle cx="7" cy="5" r="2.500" fill="#333" /><circle cx="6" cy="4" r="1" fill="#eee" /></svg>
      </button>
      <div className={`flex min-w-0 flex-1 items-center pl-[3px] text-white ${selected ? "bg-[#6d7d93]" : "bg-[#535353]"}`}>{children}</div>
    </li>
  );
}

const footerIcons: [string, ReactNode][] = [
  ["链接图层", <path d="M8 6H5a3 3 0 0 0 0 6h3M10 6h3a3 3 0 0 1 0 6h-3M5 9h8" stroke="#e0e0e0" strokeWidth="1.800" />],
  ["图层样式", <text x="2" y="14" fontSize="15" fontStyle="italic" fontFamily="'Liberation Serif', serif" fill="#8e8e8e">fx</text>],
  ["图层蒙版", <><path d="M3 4h13v10H3z" fill="#8e8e8e" /><circle cx="9.500" cy="9" r="2.500" fill="#4c4c4c" /></>],
  ["调整图层", <><circle cx="8" cy="9" r="5.500" fill={L} /><path d="M12 5a5.500 5.500 0 0 1-8 8z" fill="#666" /><path d="M15 13h3l-1.500 2z" fill={L} /></>],
  ["新建组", <path d="M3 4h5l1 2h6v8H3z" fill={L} />],
  ["新建图层", <><path d="M4 4h10v10H9V9H4z" fill={L} /><path d="M4 10h4v4z" fill={L} /></>],
  ["删除图层", <g transform="translate(2 2)"><Trash /></g>],
];

function LayersPanel() {
  return (
    <section className="mt-px flex min-h-0 flex-1 flex-col">
      <TabRow tabs={["图层", "通道", "路径"]} active={0} />
      <div className="flex h-7 shrink-0 items-center border-b border-[#3a3a3a] pl-1">
        <div className="relative">
          <Dropdown label="滤镜类型" value="类型" className="w-[71px]" pad="pl-[21px]" />
          <svg width="12" height="12" viewBox="0 0 12 12" className="pointer-events-none absolute top-1 left-[7px]" fill="none" stroke="#ddd" strokeWidth="1.500"><circle cx="7" cy="4.500" r="3.300" /><path d="M5 7l-4 4" /></svg>
        </div>
        <IconStrip items={filterIcons} names="过滤" className="ml-[18px] gap-1.5" />
        <button aria-label="图层过滤开关" className="ml-5 h-[17px] w-[9px] border border-[#2c2c2c] bg-[#444]"><span className="block h-[7px] bg-[#888]" /></button>
      </div>
      <div className="flex h-7 shrink-0 items-center border-t border-b border-t-[#686868] border-b-[#3a3a3a] pl-1">
        <Dropdown label="混合模式" value="正常" className="w-[111px]" />
        <span className="ml-2 w-[57px] whitespace-nowrap">不透明度:</span>
        <Percent label="不透明度" />
      </div>
      <div className="flex h-[29px] shrink-0 items-center border-t border-b border-t-[#686868] border-b-[#333] pl-1.5">
        <span className="w-[34px] whitespace-nowrap">锁定:</span>
        <IconStrip items={lockIcons} names="锁定" className="gap-[5px]" />
        <span className="ml-5 w-[33px] whitespace-nowrap">填充:</span>
        <Percent label="填充" />
      </div>
      <div className="flex min-h-0 flex-1 bg-[#454545]">
        <ul className="min-w-0 flex-1 [&>li]:bg-[#535353]">
          <LayerRow selected>
            <Thumb><svg className="absolute top-5 left-6" width="32" height="6" viewBox="0 0 32 6"><path d="M0 2l5 1 4-1 5 1 8-1 8 2" stroke="#fff" fill="none" /></svg></Thumb>
            <svg width="9" height="15" viewBox="0 0 9 15" className="mx-[3px]" fill="none" stroke="#d8dde4" strokeWidth="1.500"><path d="M2 6V3q0-2 2.500-2T7 3v3M2 9v3q0 2 2.500 2T7 12V9M4.500 4v7" /></svg>
            <Thumb clear={false}><svg className="absolute top-5 left-6" width="30" height="9" viewBox="0 0 30 9"><path d="M1 4l3-2M3 3l1 2M6 3l1 2M9 3l1 3M7 7l2 1h2M12 3l-1 3M14 3l1 2M17 2v3M20 2l1 3M22 3l2 3M24 2v2M27 3l1 3M28 3h1" stroke="#000" strokeWidth="1.400" fill="none" /></svg></Thumb>
            <span className="ml-2.5">白色线条</span>
          </LayerRow>
          <LayerRow selected>
            <Thumb><svg className="absolute top-5 left-6" width="30" height="6" viewBox="0 0 30 6"><path d="M2 3h2M9 2h2M16 3h3M21 2h4M27 3h2" stroke="#555" /></svg></Thumb>
            <span className="ml-2.5">黑色线条</span>
          </LayerRow>
          <LayerRow>
            <Thumb>
              <svg className="absolute top-[22px] left-6" width="30" height="6" viewBox="0 0 30 6"><path d="M1 0h15v6H1z" fill="#fef3d0" /><path d="M15 0h5l8 4v2h-8z" fill="#cfc0e0" /><path d="M1 2h3M8 2h3M16 3l4-1M22 2l3 1M27 3h1" stroke="#555" fill="none" /><path d="M1 5.500h7" stroke="#e0a01a" /><path d="M20 4h5" stroke="#c33" /></svg>
              <svg className="absolute -right-px -bottom-px" width="14" height="14" viewBox="0 0 14 14"><path d="M0 0h14v14H0z" fill="#222" /><path d="M4 5V1.500h5l3 3V12H8" stroke="#ddd" fill="#ccc" /><path d="M9 1l4 4H9z" fill="#444" stroke="#ddd" strokeWidth=".6" /><path d="M1.500 7.500h5v6h-5z" fill="#fff" stroke="#222" /><path d="M7 6h3v3H7z" fill="#222" /></svg>
            </Thumb>
            <span className="ml-2.5 truncate text-[11px]">8b82b9014a90f603aab7829e3812b31bb...</span>
          </LayerRow>
          <LayerRow>
            <Thumb clear={false} />
            <span className="ml-3 italic">背景</span>
            <Icon size={12} className="mr-4 ml-auto"><path d="M1.500 5.500h9v6h-9z" fill="#888" stroke={L} /><path d="M3.500 5V3a2.500 2.500 0 0 1 5 0v2" stroke={L} /><path d="M6 7v2.500" stroke="#222" strokeWidth="1.500" /></Icon>
          </LayerRow>
        </ul>
        <div className="w-4 shrink-0 bg-[#3e3e3e]" />
      </div>
      <div className="flex h-[19px] shrink-0 items-center justify-end gap-[9px] border-t border-[#686868] pr-[26px]">
        {footerIcons.map(([label, icon]) => <button key={label} aria-label={label}><Icon size={18}>{icon}</Icon></button>)}
      </div>
    </section>
  );
}

export default function App() {
  return (
    <div className="flex h-screen min-h-[760px] min-w-[1200px] flex-col overflow-hidden bg-[#535353] font-['Open_Sans','Noto_Sans_CJK_SC',sans-serif] text-[12px] leading-4 text-[#eee] select-none">
      <MenuBar />
      <OptionsBar />
      <div className="flex min-h-0 flex-1">
        <Toolbox />
        <Document />
        <Dock />
        <aside className="flex w-[367px] shrink-0 flex-col border-r border-l border-[#282828] bg-[#535353]">
          <div className="flex h-3 shrink-0 items-center justify-end border-b border-[#282828] bg-[#383838] pr-1"><Chevrons /></div>
          <SwatchesPanel />
          <AdjustmentsPanel />
          <LayersPanel />
        </aside>
      </div>
      <div className="h-0.5 shrink-0 bg-[#8296ad]" />
    </div>
  );
}
